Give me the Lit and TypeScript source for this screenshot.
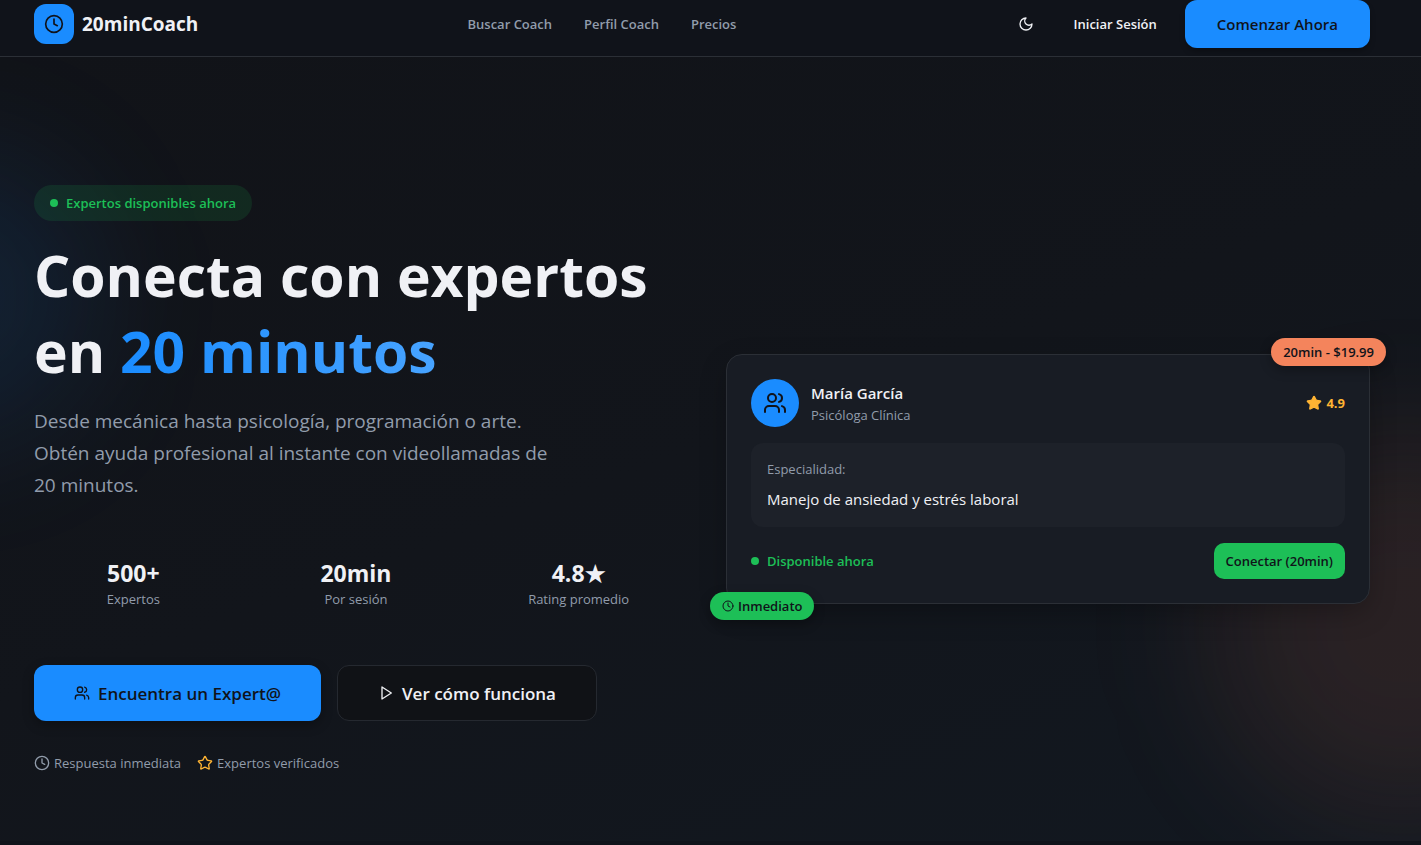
import { LitElement, html, css, svg } from "lit";
import { customElement, property } from "lit/decorators.js";

const glyphs: Record<string, unknown> = {
  clock: svg`<circle cx="12" cy="12" r="10"/><path d="M12 6v6l4 2"/>`,
  moon: svg`<path d="M12 3a6 6 0 0 0 9 9 9 9 0 1 1-9-9Z"/>`,
  users: svg`<path d="M16 21v-2a4 4 0 0 0-4-4H6a4 4 0 0 0-4 4v2"/><circle cx="9" cy="7" r="4"/><path d="M22 21v-2a4 4 0 0 0-3-3.87"/><path d="M16 3.13a4 4 0 0 1 0 7.75"/>`,
  play: svg`<path d="M6 3l14 9-14 9z"/>`,
  star: svg`<path d="M11.525 2.295a.53.53 0 0 1 .95 0l2.31 4.679a2.123 2.123 0 0 0 1.595 1.16l5.166.756a.53.53 0 0 1 .294.904l-3.736 3.638a2.123 2.123 0 0 0-.611 1.878l.882 5.14a.53.53 0 0 1-.771.56l-4.618-2.428a2.122 2.122 0 0 0-1.973 0L6.396 21.01a.53.53 0 0 1-.77-.56l.881-5.139a2.122 2.122 0 0 0-.611-1.879L2.16 9.795a.53.53 0 0 1 .294-.906l5.165-.755a2.122 2.122 0 0 0 1.597-1.16z"/>`,
};

@customElement("ui-icon")
class UiIcon extends LitElement {
  @property() name = "clock";
  @property({ type: Boolean }) filled = false;

  static styles = css`
    :host {
      display: inline-flex;
      flex: none;
      width: 16px;
      height: 16px;
    }
    .glyph {
      width: 100%;
      height: 100%;
      fill: none;
      stroke: currentColor;
      stroke-width: 2;
      stroke-linecap: round;
      stroke-linejoin: round;
    }
    .filled {
      fill: currentColor;
    }
  `;

  render() {
    return html`<svg class="glyph ${this.filled ? "filled" : ""}" viewBox="0 0 24 24" aria-hidden="true">
      ${glyphs[this.name]}
    </svg>`;
  }
}

@customElement("site-header")
class SiteHeader extends LitElement {
  static styles = css`
    :host {
      display: block;
      border-bottom: 1px solid #2b2f36;
      background: #10131a;
      padding-right: 17px;
    }
    .bar {
      box-sizing: border-box;
      max-width: 1400px;
      margin: 0 auto;
      padding: 0 32px 8px;
      display: flex;
      align-items: center;
      justify-content: space-between;
    }
    .brand {
      display: flex;
      align-items: center;
      gap: 8px;
      color: #f0f1f5;
      font-size: 19px;
      line-height: 28px;
      font-weight: 700;
      text-decoration: none;
    }
    .mark {
      width: 40px;
      height: 40px;
      border-radius: 12px;
      background: #1a8cff;
      color: #10131a;
      display: grid;
      place-items: center;
    }
    .mark ui-icon {
      width: 20px;
      height: 20px;
    }
    .links {
      display: flex;
      gap: 32px;
    }
    .links a {
      color: #919cab;
      font-size: 13px;
      line-height: 20px;
      font-weight: 600;
      text-decoration: none;
    }
    .actions {
      display: flex;
      align-items: center;
      gap: 16px;
    }
    button {
      font: inherit;
      border: 0;
      background: none;
      color: #f0f1f5;
      cursor: pointer;
    }
    .theme {
      width: 40px;
      height: 40px;
      padding: 0;
      display: grid;
      place-items: center;
    }
    .login {
      padding: 8px 12px;
      font-size: 13px;
      line-height: 20px;
      font-weight: 600;
    }
    .start {
      height: 48px;
      padding: 0 32px;
      border-radius: 12px;
      background: #1a8cff;
      color: #10131a;
      font-size: 15px;
      font-weight: 600;
      box-shadow: 0 4px 6px -1px rgb(0 0 0 / 0.3);
    }
  `;

  render() {
    return html`<header class="bar">
      <a class="brand" href="#"><span class="mark"><ui-icon name="clock"></ui-icon></span>20minCoach</a>
      <nav class="links">
        <a href="#buscar">Buscar Coach</a>
        <a href="#perfil">Perfil Coach</a>
        <a href="#precios">Precios</a>
      </nav>
      <div class="actions">
        <button class="theme" aria-label="Cambiar tema"><ui-icon name="moon"></ui-icon></button>
        <button class="login">Iniciar Sesión</button>
        <button class="start">Comenzar Ahora</button>
      </div>
    </header>`;
  }
}

@customElement("coach-card")
class CoachCard extends LitElement {
  static styles = css`
    :host {
      display: block;
      position: relative;
    }
    .card {
      border: 1px solid #2b2f36;
      border-radius: 16px;
      background: #181c24;
      padding: 24px;
      display: grid;
      gap: 16px;
      box-shadow: 0 10px 30px -4px rgb(0 0 0 / 0.3);
    }
    .row {
      display: flex;
      align-items: center;
      justify-content: space-between;
    }
    .person {
      display: flex;
      align-items: center;
      gap: 12px;
    }
    .avatar {
      width: 48px;
      height: 48px;
      border-radius: 50%;
      background: #1a8cff;
      color: #10131a;
      display: grid;
      place-items: center;
    }
    .avatar ui-icon {
      width: 24px;
      height: 24px;
    }
    .name {
      margin: 0;
      color: #f0f1f5;
      font-size: 15px;
      line-height: 24px;
      font-weight: 600;
    }
    .muted {
      margin: 0;
      color: #919cab;
      font-size: 13px;
      line-height: 20px;
    }
    .rating {
      display: flex;
      align-items: center;
      gap: 4px;
      color: #ffb433;
      font-size: 13px;
      line-height: 20px;
      font-weight: 700;
    }
    .topic {
      border-radius: 12px;
      background: #1d2129;
      padding: 16px;
      display: grid;
      gap: 8px;
    }
    .subject {
      margin: 0;
      color: #f0f1f5;
      font-size: 15px;
      line-height: 24px;
    }
    .status {
      display: flex;
      align-items: center;
      gap: 8px;
      color: #1dbf57;
      font-size: 13px;
      line-height: 20px;
      font-weight: 600;
    }
    .dot {
      width: 8px;
      height: 8px;
      border-radius: 50%;
      background: currentColor;
    }
    .connect {
      height: 36px;
      padding: 0 12px;
      border: 0;
      border-radius: 10px;
      background: #1dbf57;
      color: #10131a;
      font: inherit;
      font-size: 13px;
      font-weight: 600;
      cursor: pointer;
    }
    .tag {
      position: absolute;
      display: flex;
      align-items: center;
      gap: 4px;
      padding: 4px 12px;
      border-radius: 14px;
      color: #10131a;
      font-size: 13px;
      line-height: 20px;
      font-weight: 600;
      box-shadow: 0 4px 12px rgb(0 0 0 / 0.3);
    }
    .price {
      top: -16px;
      right: -16px;
      background: #f4845c;
    }
    .instant {
      bottom: -16px;
      left: -16px;
      background: #1dbf57;
    }
    .instant ui-icon {
      width: 12px;
      height: 12px;
    }
  `;

  render() {
    return html`<article class="card">
        <div class="row">
          <div class="person">
            <span class="avatar"><ui-icon name="users"></ui-icon></span>
            <div>
              <h3 class="name">María García</h3>
              <p class="muted">Psicóloga Clínica</p>
            </div>
          </div>
          <span class="rating"><ui-icon name="star" filled></ui-icon>4.9</span>
        </div>
        <div class="topic">
          <p class="muted">Especialidad:</p>
          <p class="subject">Manejo de ansiedad y estrés laboral</p>
        </div>
        <div class="row">
          <span class="status"><span class="dot"></span>Disponible ahora</span>
          <button class="connect">Conectar (20min)</button>
        </div>
      </article>
      <span class="tag price">20min - $19.99</span>
      <span class="tag instant"><ui-icon name="clock"></ui-icon>Inmediato</span>`;
  }
}

@customElement("app-root")
class AppRoot extends LitElement {
  static styles = css`
    :host {
      display: block;
      min-height: 100vh;
      background: #10131a;
      color: #f0f1f5;
      font-family: "Segoe UI", "Open Sans", "Noto Sans", sans-serif;
    }
    .hero {
      position: relative;
      overflow: hidden;
      padding: 128px 17px 68px 0;
      background: linear-gradient(160deg, #111318, #12151b 50%, #121820);
    }
    .glow {
      position: absolute;
      border-radius: 50%;
      filter: blur(64px);
    }
    .blue {
      width: 288px;
      height: 288px;
      top: 96px;
      left: -192px;
      background: rgb(26 140 255 / 0.11);
    }
    .orange {
      width: 384px;
      height: 384px;
      bottom: 24px;
      right: -176px;
      background: rgb(244 132 92 / 0.1);
    }
    .inner {
      position: relative;
      box-sizing: border-box;
      max-width: 1400px;
      margin: 0 auto;
      padding: 0 32px;
      display: grid;
      grid-template-columns: 1fr 1fr;
      gap: 48px;
      align-items: center;
    }
    .copy {
      display: grid;
      gap: 32px;
    }
    .intro {
      display: grid;
      gap: 16px;
      justify-items: start;
    }
    .badge {
      display: flex;
      align-items: center;
      gap: 8px;
      padding: 8px 16px;
      border-radius: 18px;
      background: rgb(29 191 87 / 0.13);
      color: #1dbf57;
      font-size: 13px;
      line-height: 20px;
      font-weight: 600;
    }
    .dot {
      width: 8px;
      height: 8px;
      border-radius: 50%;
      background: currentColor;
    }
    h1 {
      margin: 0;
      font-size: 57px;
      line-height: 76px;
      font-weight: 700;
    }
    .accent {
      background: linear-gradient(90deg, #1a8cff, #47a3ff);
      background-clip: text;
      -webkit-background-clip: text;
      color: transparent;
    }
    .lead {
      margin: 0;
      max-width: 540px;
      color: #919cab;
      font-size: 19px;
      line-height: 32px;
    }
    .stats {
      margin: 0;
      padding: 24px 0;
      display: grid;
      grid-template-columns: repeat(3, 1fr);
      gap: 24px;
      text-align: center;
    }
    .stat {
      display: flex;
      flex-direction: column-reverse;
    }
    .stat dt {
      color: #919cab;
      font-size: 13px;
      line-height: 20px;
    }
    .stat dd {
      margin: 0;
      font-size: 23px;
      line-height: 32px;
      font-weight: 700;
    }
    .ctas {
      display: flex;
      gap: 16px;
    }
    .cta {
      box-sizing: border-box;
      height: 56px;
      padding: 0 40px;
      border: 0;
      border-radius: 12px;
      display: flex;
      align-items: center;
      gap: 8px;
      font: inherit;
      font-size: 17px;
      font-weight: 600;
      cursor: pointer;
    }
    .primary {
      background: #1a8cff;
      color: #10131a;
      box-shadow: 0 4px 12px rgb(0 0 0 / 0.3);
    }
    .secondary {
      border: 1px solid #252930;
      background: #101216;
      color: #f0f1f5;
    }
    .notes {
      display: flex;
      gap: 16px;
      color: #919cab;
      font-size: 13px;
      line-height: 20px;
    }
    .note {
      display: flex;
      align-items: center;
      gap: 4px;
    }
    .gold {
      color: #ffb433;
    }
  `;

  render() {
    return html`<site-header></site-header>
      <main class="hero">
        <div class="glow blue"></div>
        <div class="glow orange"></div>
        <div class="inner">
          <section class="copy">
            <div class="intro">
              <span class="badge"><span class="dot"></span>Expertos disponibles ahora</span>
              <h1>Conecta con expertos<br />en <span class="accent">20 minutos</span></h1>
              <p class="lead">
                Desde mecánica hasta psicología, programación o arte. Obtén ayuda profesional al instante con
                videollamadas de 20 minutos.
              </p>
            </div>
            <dl class="stats">
              <div class="stat"><dt>Expertos</dt><dd>500+</dd></div>
              <div class="stat"><dt>Por sesión</dt><dd>20min</dd></div>
              <div class="stat"><dt>Rating promedio</dt><dd>4.8★</dd></div>
            </dl>
            <div class="ctas">
              <button class="cta primary"><ui-icon name="users"></ui-icon>Encuentra un Expert@</button>
              <button class="cta secondary"><ui-icon name="play"></ui-icon>Ver cómo funciona</button>
            </div>
            <div class="notes">
              <span class="note"><ui-icon name="clock"></ui-icon>Respuesta inmediata</span>
              <span class="note"><ui-icon name="star" class="gold"></ui-icon>Expertos verificados</span>
            </div>
          </section>
          <coach-card></coach-card>
        </div>
      </main>`;
  }
}
